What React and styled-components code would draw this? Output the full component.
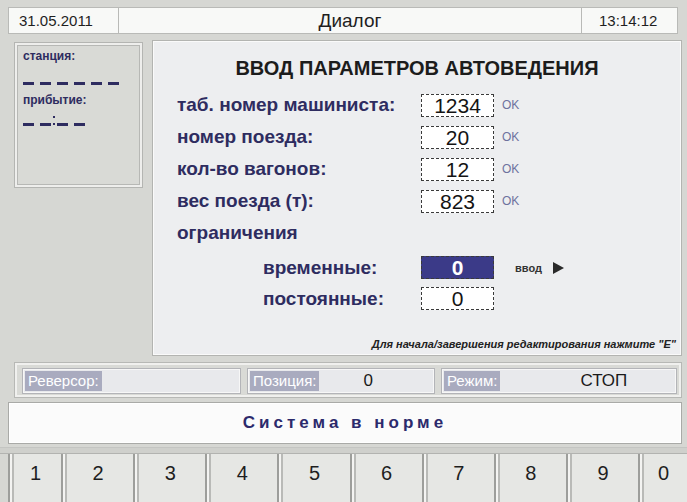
import React from "react";
import styled, { createGlobalStyle } from "styled-components";

const GlobalStyle = createGlobalStyle`
  html, body {
    margin: 0;
    padding: 0;
    background: #d6d7d3;
  }
  body {
    font-family: "Liberation Sans", Arial, sans-serif;
    overflow: hidden;
  }
`;

const NAVY = "#2e2c60";

const Screen = styled.div`
  width: 687px;
  height: 502px;
  display: flex;
  flex-direction: column;
  overflow: hidden;
  background: #d6d7d3;
`;

const TopBar = styled.div`
  margin: 7px 9px 0 8px;
  height: 27px;
  display: grid;
  grid-template-columns: 109px 1fr 96px;
  border: 1px solid #b9bab7;
  background: #f8f9f7;
  box-sizing: border-box;
`;

const TopCell = styled.div`
  display: flex;
  align-items: center;
  justify-content: ${p => (p.center ? "center" : "flex-start")};
  padding-left: ${p => p.pad || 0}px;
  font-family: "Liberation Sans Narrow", "Liberation Sans", sans-serif;
  font-size: ${p => (p.center ? 19 : 15)}px;
  color: #1f1f1f;
  border-left: ${p => (p.first ? "none" : "1px solid #b9bab7")};
`;

const Middle = styled.div`
  display: flex;
  align-items: flex-start;
  margin: 6px 5px 0 14px;
  gap: 9px;
`;

const SidePanel = styled.div`
  width: 129px;
  height: 146px;
  margin-top: 2px;
  box-sizing: border-box;
  padding: 6px 8px;
  background: #d9dad6;
  border: 1px solid #b4b5b2;
  box-shadow: inset 0 0 0 2px #eeeeec, inset 0 0 0 3px #b7b8b5;
  color: ${NAVY};
`;

const SideLabel = styled.div`
  font-size: 12px;
  font-weight: 700;
  line-height: 14px;
  margin-top: ${p => p.gap || 0}px;
`;

// "_ _ _" placeholders for an empty station / arrival time
const DashLine = styled.div`
  display: flex;
  align-items: flex-end;
  gap: 6px;
  height: 12px;
  margin-top: ${p => p.gap || 0}px;
`;

const Dash = styled.span`
  width: 11px;
  height: 3px;
  background: ${NAVY};
`;

const Colon = styled.span`
  width: 2px;
  height: 10px;
  margin: 0 -4px;
  background: linear-gradient(${NAVY} 0 2px, transparent 2px 7px, ${NAVY} 7px 9px, transparent 9px);
`;

const MainPanel = styled.div`
  flex: 1;
  height: 316px;
  box-sizing: border-box;
  padding: 15px 5px 0 24px;
  background: #edeef0;
  border: 1px solid #b3b4b1;
  box-shadow: inset 0 0 0 1px #fafafa;
  display: flex;
  flex-direction: column;
`;

const Title = styled.h1`
  margin: 0 0 9px 0;
  padding-right: 19px;
  font-size: 20px;
  line-height: 24px;
  font-weight: 700;
  text-align: center;
  color: #1c1c1c;
`;

const Row = styled.div`
  display: grid;
  grid-template-columns: ${p => 244 - (p.indent || 0)}px 73px auto;
  padding-left: ${p => p.indent || 0}px;
  align-items: center;
  height: ${p => p.h || 32}px;
  margin-top: ${p => p.top || 0}px;
`;

const Label = styled.div`
  font-size: 19px;
  font-weight: 700;
  color: ${NAVY};
  white-space: nowrap;
`;

const ValueBox = styled.div`
  height: 23px;
  box-sizing: border-box;
  border: 1px dashed #3a3a3a;
  background: ${p => (p.active ? "#3b3a88" : "#ffffff")};
  color: ${p => (p.active ? "#ffffff" : "#141414")};
  font-size: 21px;
  font-weight: ${p => (p.active ? 700 : 400)};
  line-height: 22px;
  text-align: center;
`;

const Ok = styled.span`
  margin-left: 8px;
  font-size: 12px;
  color: #6e729e;
`;

const EnterHint = styled.div`
  display: flex;
  align-items: center;
  margin-left: 21px;
  gap: 11px;
  font-size: 11px;
  font-weight: 700;
  color: #333;
`;

const Arrow = styled.span`
  width: 0;
  height: 0;
  border-top: 6px solid transparent;
  border-bottom: 6px solid transparent;
  border-left: 11px solid #2a2a2a;
`;

const Footer = styled.div`
  margin-top: auto;
  margin-bottom: 5px;
  text-align: right;
  font-size: 11px;
  font-weight: 700;
  font-style: italic;
  color: #222;
`;

const StatusRow = styled.div`
  margin: 6px 5px 0 14px;
  height: 36px;
  box-sizing: border-box;
  padding: 5px 4px 5px 7px;
  display: grid;
  grid-template-columns: 219px 188px 1fr;
  gap: 6px;
  border: 1px solid #b7b8b5;
  box-shadow: inset 0 0 0 2px #f0f0ee;
  background: #d9dad6;
`;

const StatusCell = styled.div`
  display: flex;
  align-items: center;
  padding: 2px;
  background: #e8e9ec;
  border: 1px solid #b3b4b8;
  box-shadow: inset 0 0 0 1px #f7f7f7;
`;

const StatusLabel = styled.span`
  background: #a9abbf;
  color: #ffffff;
  font-size: 15px;
  line-height: 20px;
  padding: 0 3px;
`;

const StatusValue = styled.span`
  margin-left: ${p => p.offset}px;
  font-size: 17px;
  color: #1a1a1a;
`;

const SystemBar = styled.div`
  margin: 4px 5px 0 8px;
  height: 42px;
  box-sizing: border-box;
  display: flex;
  align-items: center;
  justify-content: center;
  background: #fbfbfb;
  border: 1px solid #a9aaa7;
  box-shadow: inset 0 0 0 1px #ffffff;
  font-size: 17px;
  font-weight: 700;
  letter-spacing: 4px;
  color: #2c2a6c;
`;

const KeyStrip = styled.div`
  margin-top: 3px;
  height: 5px;
  border-top: 1px solid #c4c5c2;
  border-bottom: 1px solid #b2b3b0;
  background: #cfd0cc;
`;

const Keys = styled.div`
  margin-left: 8px;
  flex: 1;
  display: grid;
  grid-template-columns: 53px repeat(8, 1fr) 49px;
`;

const Key = styled.div`
  box-sizing: border-box;
  padding-top: 7px;
  text-align: center;
  font-size: 20px;
  line-height: 24px;
  color: #1e1e1e;
  background: #e6e7e4;
  border-left: 2px solid #9d9e9b;
  box-shadow: inset 2px 0 0 #f4f4f2, inset 4px 0 0 #b9bab7;
`;

const fields = [
  { label: "таб. номер машиниста:", value: "1234" },
  { label: "номер поезда:", value: "20" },
  { label: "кол-во вагонов:", value: "12" },
  { label: "вес поезда (т):", value: "823" }
];

const keys = ["1", "2", "3", "4", "5", "6", "7", "8", "9", "0"];

export default function App() {
  return (
    <Screen>
      <GlobalStyle />
      <TopBar>
        <TopCell first pad={10}>31.05.2011</TopCell>
        <TopCell center>Диалог</TopCell>
        <TopCell pad={17}>13:14:12</TopCell>
      </TopBar>

      <Middle>
        <SidePanel>
          <SideLabel>станция:</SideLabel>
          <DashLine gap={10}>
            <Dash />
            <Dash />
            <Dash />
            <Dash />
            <Dash />
            <Dash />
          </DashLine>
          <SideLabel gap={8}>прибытие:</SideLabel>
          <DashLine gap={7}>
            <Dash />
            <Dash />
            <Colon />
            <Dash />
            <Dash />
          </DashLine>
        </SidePanel>

        <MainPanel>
          <Title>ВВОД ПАРАМЕТРОВ АВТОВЕДЕНИЯ</Title>
          {fields.map(f => (
            <Row key={f.label}>
              <Label>{f.label}</Label>
              <ValueBox>{f.value}</ValueBox>
              <Ok>OK</Ok>
            </Row>
          ))}
          <Row>
            <Label>ограничения</Label>
          </Row>
          <Row indent={86} top={3} h={31}>
            <Label>временные:</Label>
            <ValueBox active>0</ValueBox>
            <EnterHint>
              ввод <Arrow />
            </EnterHint>
          </Row>
          <Row indent={86} h={31}>
            <Label>постоянные:</Label>
            <ValueBox>0</ValueBox>
          </Row>
          <Footer>Для начала/завершения редактирования нажмите "E"</Footer>
        </MainPanel>
      </Middle>

      <StatusRow>
        <StatusCell>
          <StatusLabel>Реверсор:</StatusLabel>
        </StatusCell>
        <StatusCell>
          <StatusLabel>Позиция:</StatusLabel>
          <StatusValue offset={44}>0</StatusValue>
        </StatusCell>
        <StatusCell>
          <StatusLabel>Режим:</StatusLabel>
          <StatusValue offset={80}>СТОП</StatusValue>
        </StatusCell>
      </StatusRow>

      <SystemBar>Система в норме</SystemBar>
      <KeyStrip />
      <Keys>
        {keys.map(k => (
          <Key key={k}>{k}</Key>
        ))}
      </Keys>
    </Screen>
  );
}
